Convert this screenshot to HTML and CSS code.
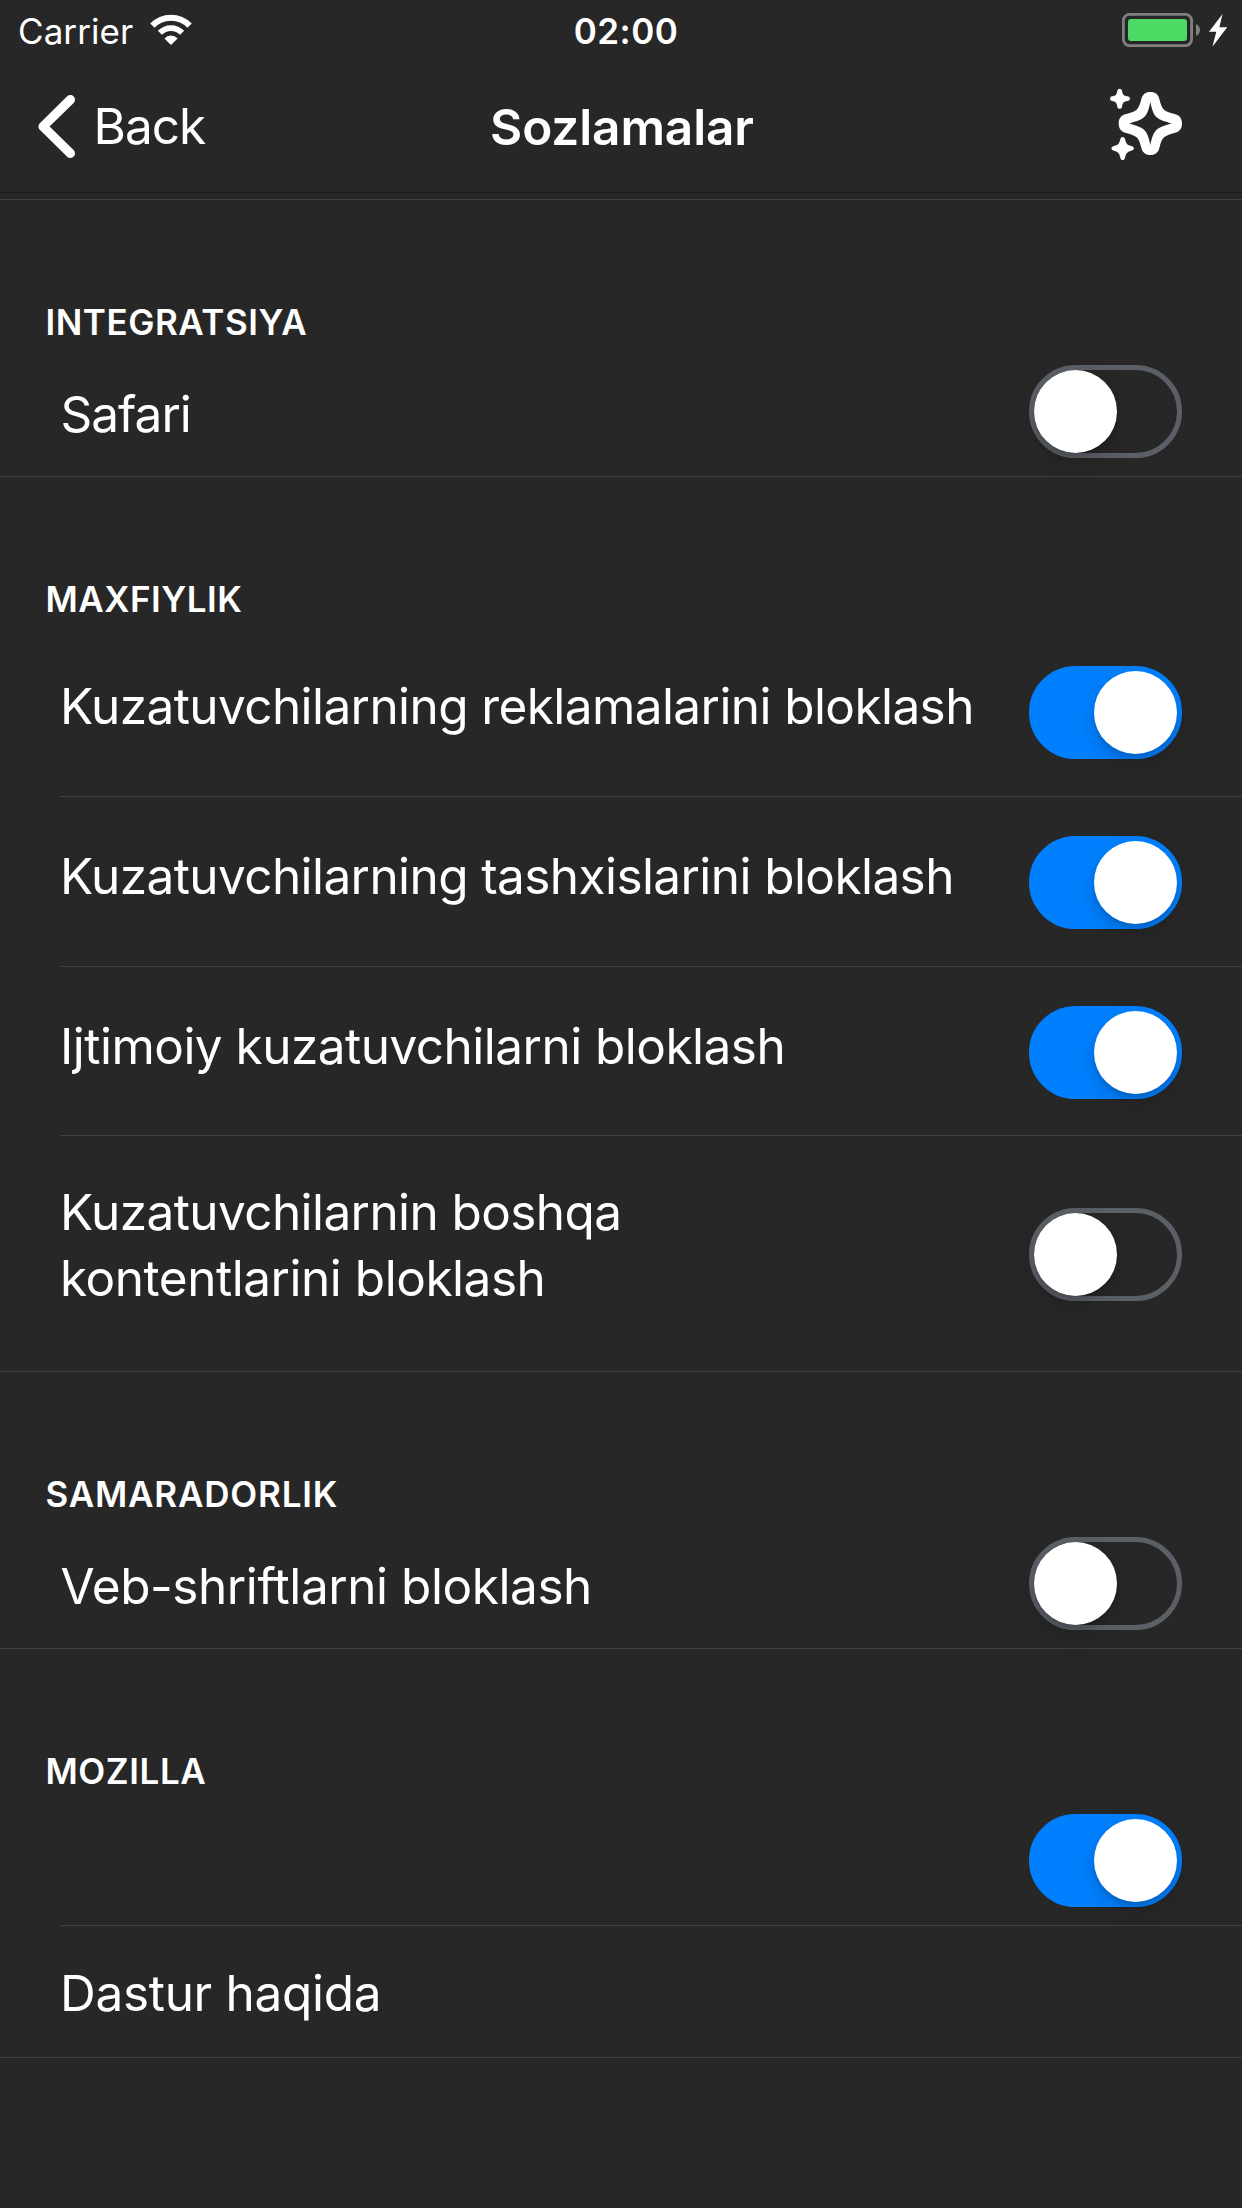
FILE: index.html
```html
<!DOCTYPE html>
<html lang="uz">
<head>
<meta charset="utf-8">
<title>Sozlamalar</title>
<link rel="stylesheet" href="styles.css">
</head>
<body>
<div class="status-bar">
  <div class="status-left">
    <span class="carrier">Carrier</span>
    <svg class="wifi" width="44" height="32" viewBox="149 14 44 32" fill="none" stroke="#fff">
      <path d="M152.4 25.6A25.8 25.8 0 0 1 189.6 25.6" stroke-width="6"/>
      <path d="M159.9 32.8A15.4 15.4 0 0 1 182.1 32.8" stroke-width="5.7"/>
      <path d="M171 44.9L164.4 38.4A9.2 9.2 0 0 1 177.6 38.4Z" fill="#fff" stroke="none"/>
    </svg>
  </div>
  <time class="clock">02:00</time>
  <svg class="battery" width="108" height="36" viewBox="1121 12 108 36">
    <rect x="1123.4" y="14.4" width="68.2" height="31.2" rx="6" fill="none" stroke="#808080" stroke-width="2.8"/>
    <rect x="1128" y="19" width="59" height="22" rx="3" fill="#4cd964"/>
    <path d="M1196 24C1201.300 26 1201.300 34 1196 36Z" fill="#808080"/>
    <path d="M1222.500 14L1209 31.700H1216.300L1212.400 46.700L1227.200 27.300H1219.400Z" fill="#fff"/>
  </svg>
</div>
<header class="nav-bar">
  <a class="back">
    <svg class="chevron" width="40" height="66" viewBox="37 94 40 66" fill="none" stroke="#fff" stroke-width="9.200" stroke-linecap="round" stroke-linejoin="round">
      <path d="M70.400 99.600L43 126.500L70.400 153.400"/>
    </svg>
    <span class="back-label">Back</span>
  </a>
  <h1 class="title">Sozlamalar</h1>
  <svg class="sparkle" width="74" height="74" viewBox="87 261 222 222" fill="#fff">
    <path fill-rule="evenodd" d="M211 276C226 276 235 284 238 297C242 314 246 324 253 330C260 335 270 339 286 343C299 346 306 356 306 370.500C306 385 299 395 286 398C270 402 260 406 253 411C246 417 242 427 238 444C235 457 226 465 211 465C196 465 187 457 184 444C180 427 176 417 169 411C162 406 152 402 136 398C123 395 116 385 116 370.500C116 356 123 346 136 343C152 339 162 335 169 330C176 324 180 314 184 297C187 284 196 276 211 276ZM211 306C206 332 200 345 192 352C184 359 170 364 147 370.500C170 377 184 382 192 389C200 396 206 409 211 435C216 409 222 396 230 389C238 382 252 377 275 370.500C252 364 238 359 230 352C222 345 216 332 211 306Z"/>
    <path d="M119 266C123 266 125 268 126 272C128 284 131 287 143 289Q150 290 150 296Q150 302 143 303C131 305 128 308 126 320C125 324 123 326 119 326C115 326 113 324 112 320C110 308 107 305 96 303Q90 302 90 296Q90 290 96 289C107 287 110 284 112 272C113 268 115 266 119 266Z"/>
    <path d="M128 411C132 411 134 413 135 418C138 431 142 436 154 438Q162 440 162 445Q162 451 154 452C142 455 138 459 135 473C134 478 132 480 128 480C124 480 122 478 121 473C118 459 114 455 102 452Q94 451 94 445Q94 440 102 438C114 436 118 431 121 418C122 413 124 411 128 411Z"/>
  </svg>
</header>
<main class="settings">
  <section class="group">
    <h2 class="heading integration">Integratsiya</h2>
    <div class="row"><span class="label safari">Safari</span><span class="toggle"></span></div>
  </section>
  <section class="group">
    <h2 class="heading privacy">Maxfiylik</h2>
    <div class="row tall first"><span class="label">Kuzatuvchilarning reklamalarini bloklash</span><span class="toggle on"></span></div>
    <div class="row tall"><span class="label">Kuzatuvchilarning tashxislarini bloklash</span><span class="toggle on"></span></div>
    <div class="row tall third"><span class="label social">Ijtimoiy kuzatuvchilarni bloklash</span><span class="toggle on"></span></div>
    <div class="row double"><span class="label">Kuzatuvchilarnin boshqa<br><span class="content">kontentlarini bloklash</span></span><span class="toggle"></span></div>
  </section>
  <section class="group">
    <h2 class="heading performance">Samaradorlik</h2>
    <div class="row"><span class="label fonts">Veb-shriftlarni bloklash</span><span class="toggle"></span></div>
  </section>
  <section class="group">
    <h2 class="heading">Mozilla</h2>
    <div class="row"><span class="label"></span><span class="toggle on"></span></div>
    <div class="row link"><span class="label about">Dastur haqida</span></div>
  </section>
</main>
</body>
</html>
```
FILE: styles.css
```css
* { box-sizing: border-box; }

body {
  margin: 0;
  min-height: 2208px;
  background: #272727;
  color: #fff;
  font-family: Inter, "Liberation Sans", sans-serif;
  font-size: 49.5px;
  line-height: 66px;
}

h1, h2 { margin: 0; font-weight: 600; }
svg { display: block; flex: none; }

/* Status bar */
.status-bar {
  display: grid;
  grid-template-columns: 1fr auto 1fr;
  height: 62px;
  padding: 0 13px 0 18px;
  font-size: 35px;
  line-height: 44px;
}
.status-left { display: flex; align-items: flex-start; gap: 15.5px; }
.carrier { padding-top: 9px; letter-spacing: 0.075px; }
.wifi { margin-top: 14px; }
.clock { padding: 9px 0 0 5px; font-weight: 600; letter-spacing: 0.46px; }
.battery { justify-self: end; margin-top: 12px; }

/* Navigation bar */
.nav-bar {
  display: grid;
  grid-template-columns: 1fr auto 1fr;
  height: 131px;
  padding: 0 59px 0 37px;
  border-bottom: 1px solid #1b1b1b;
}
.back { display: flex; align-items: flex-start; gap: 16.5px; }
.chevron { margin-top: 32px; }
.back-label { padding-top: 31px; letter-spacing: -1px; }
.title {
  padding: 32px 0 0 24px;
  font-size: 49.5px;
  letter-spacing: -0.1px;
}
.sparkle { justify-self: end; margin-top: 25px; }

/* Setting groups */
.settings { margin-top: 6px; border-top: 1px solid #444; }
.group { border-bottom: 1px solid #424242; }
.heading {
  height: 144px;
  padding: 100px 0 0 45.5px;
  font-size: 35px;
  line-height: 44px;
  letter-spacing: 0.58px;
  text-transform: uppercase;
}
.integration { letter-spacing: 0.54px; }
.privacy { letter-spacing: 0.5px; }
.performance { letter-spacing: 0.81px; }

.row {
  display: flex;
  justify-content: space-between;
  align-items: flex-start;
  height: 132px;
  margin-left: 60px;
  padding: 21px 60px 0 0;
}
.row + .row { border-top: 1px solid #424242; }
.label { padding-top: 16px; letter-spacing: -0.585px; white-space: nowrap; }

.row.tall { height: 170px; padding-top: 39px; }
.tall .label, .double .label { padding-top: 7px; }
.row.tall.first { height: 175px; padding-top: 45px; }
.row.tall.third { height: 169px; }
.row.double { height: 236px; padding-top: 36px; }
.double .toggle { margin-top: 36px; }
.row.link { height: 132px; padding-top: 18px; }

.safari { padding-left: 0.5px; letter-spacing: -1px; }
.social { letter-spacing: -0.52px; }
.content { letter-spacing: -0.466px; }
.fonts { padding-left: 0.5px; letter-spacing: -0.435px; }
.about { letter-spacing: -0.3px; }

/* Switches */
.toggle {
  display: flex;
  flex: none;
  width: 153px;
  height: 93px;
  border: 5px solid #5b6067;
  border-radius: 47px;
}
.toggle::before {
  content: "";
  width: 83px;
  height: 83px;
  border-radius: 50%;
  background: #fff;
  box-shadow: 0 9px 24px rgba(0, 0, 0, 0.15), 0 4px 5px rgba(0, 0, 0, 0.13);
}
.toggle.on {
  justify-content: flex-end;
  border-color: #0080ff;
  background: #0080ff;
}
```
